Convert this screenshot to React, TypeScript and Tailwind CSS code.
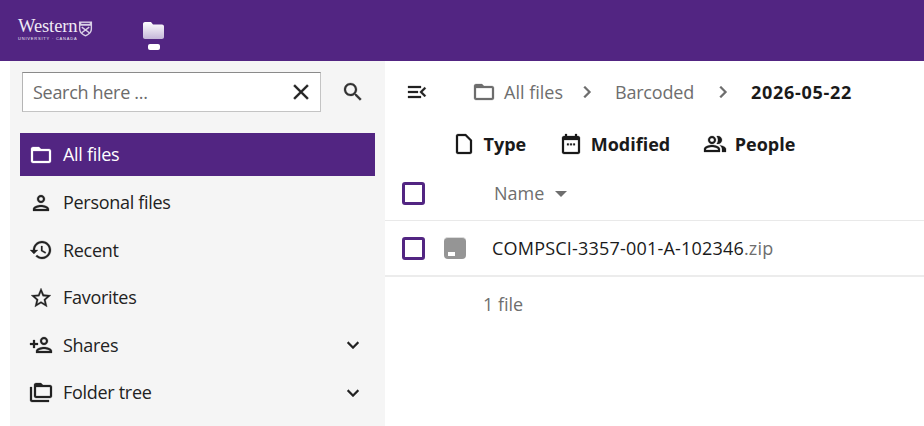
import { ReactNode } from 'react';

const P = {
  folder: 'M20 6h-8l-2-2H4c-1.1 0-1.99.9-1.99 2L2 18c0 1.1.9 2 2 2h16c1.1 0 2-.9 2-2V8c0-1.1-.9-2-2-2zm0 12H4V8h16v10z',
  person: 'M12 6c1.1 0 2 .9 2 2s-.9 2-2 2-2-.9-2-2 .9-2 2-2m0 10c2.7 0 5.8 1.29 6 2H6c.23-.72 3.31-2 6-2m0-12C9.79 4 8 5.79 8 8s1.79 4 4 4 4-1.79 4-4-1.79-4-4-4zm0 10c-2.67 0-8 1.34-8 4v2h16v-2c0-2.66-5.33-4-8-4z',
  history: 'M13 3c-4.97 0-9 4.03-9 9H1l3.89 3.89.07.14L9 12H6c0-3.87 3.13-7 7-7s7 3.13 7 7-3.13 7-7 7c-1.93 0-3.68-.79-4.94-2.06l-1.42 1.42C8.27 19.99 10.51 21 13 21c4.97 0 9-4.03 9-9s-4.03-9-9-9zm-1 5v5l4.28 2.54.72-1.21-3.5-2.08V8H12z',
  star: 'M22 9.24l-7.19-.62L12 2 9.19 8.63 2 9.24l5.46 4.73L5.82 21 12 17.27 18.18 21l-1.63-7.03L22 9.24zM12 15.4l-3.76 2.27 1-4.28-3.32-2.88 4.38-.38L12 6.1l1.71 4.04 4.38.38-3.32 2.88 1 4.28L12 15.4z',
  personAdd: 'M15 12c2.21 0 4-1.79 4-4s-1.79-4-4-4-4 1.79-4 4 1.79 4 4 4zm0-6c1.1 0 2 .9 2 2s-.9 2-2 2-2-.9-2-2 .9-2 2-2zm0 8c-2.67 0-8 1.34-8 4v2h16v-2c0-2.66-5.33-4-8-4zm-6 4c.22-.72 3.31-2 6-2 2.7 0 5.8 1.29 6 2H9zm-3-3v-3h3v-2H6V7H4v3H1v2h3v3h2z',
  folderCopy: 'M3 19h17v2H3c-1.1 0-2-.9-2-2V6h2v13zM23 6v9c0 1.1-.9 2-2 2H7c-1.1 0-2-.9-2-2l.01-11C5.01 2.9 5.9 2 7 2h5l2 2h7c1.1 0 2 .9 2 2zM7 15h14V6H7v9z',
  search: 'M15.5 14h-.79l-.28-.27C15.41 12.59 16 11.11 16 9.5 16 5.91 13.09 3 9.5 3S3 5.91 3 9.5 5.91 16 9.5 16c1.61 0 3.09-.59 4.23-1.57l.27.28v.79l5 4.99L20.49 19l-4.99-5zm-6 0C7.01 14 5 11.99 5 9.5S7.01 5 9.5 5 14 7.01 14 9.5 11.99 14 9.5 14z',
  close: 'M19 6.41L17.59 5 12 10.59 6.41 5 5 6.41 10.59 12 5 17.59 6.41 19 12 13.41 17.59 19 19 17.59 13.41 12z',
  menuOpen: 'M3 18h13v-2H3v2zm0-5h10v-2H3v2zm0-7v2h13V6H3zm18 9.59L17.42 12 21 8.41 19.59 7l-5 5 5 5L21 15.59z',
  file: 'M14 2H6c-1.1 0-2 .9-2 2v16c0 1.1.9 2 2 2h12c1.1 0 2-.9 2-2V8l-6-6zm4 18H6V4h7.17L18 8.83V20z',
  calendar: 'M19 4h-1V2h-2v2H8V2H6v2H5c-1.1 0-2 .9-2 2v14c0 1.1.9 2 2 2h14c1.1 0 2-.9 2-2V6c0-1.1-.9-2-2-2zm0 16H5V8h14v12zM8 11.500h1.800v1.800H8v-1.800zm3.100 0h1.800v1.800h-1.800v-1.800zm3.100 0H16v1.800h-1.800v-1.800z',
  people: 'M16.670 13.130C18.040 14.060 19 15.320 19 17v3h4v-3c0-2.180-3.570-3.470-6.330-3.870zM15 12c2.210 0 4-1.790 4-4s-1.790-4-4-4c-.470 0-.910.100-1.330.240C14.500 5.270 15 6.580 15 8s-.500 2.730-1.330 3.760c.420.140.860.240 1.330.240zM9 12c2.210 0 4-1.790 4-4s-1.790-4-4-4-4 1.790-4 4 1.790 4 4 4zm0-6c1.100 0 2 .900 2 2s-.900 2-2 2-2-.900-2-2 .900-2 2-2zM9 13c-2.670 0-8 1.340-8 4v3h16v-3c0-2.660-5.330-4-8-4zm6 5H3v-.990C3.200 16.290 6.300 15 9 15s5.800 1.290 6 2v1z',
  expand: 'M16.590 8.590L12 13.170 7.410 8.590 6 10l6 6 6-6z',
  chevron: 'M10 6L8.590 7.410 13.170 12l-4.580 4.590L10 18l6-6z',
};

function Icon({ d, className }: { d: string; className?: string }) {
  return (
    <svg viewBox="0 0 24 24" fill="currentColor" stroke="currentColor" strokeWidth="0.25" className={className}>
      <path d={d} />
    </svg>
  );
}

function NavItem({ icon, label, active, expand }: { icon: string; label: string; active?: boolean; expand?: boolean }) {
  return (
    <div className={`flex items-center pl-[9px] pr-[10px] ${active ? 'h-[43px] mt-[2px] mb-[3px] bg-[#522582] text-white' : 'h-[47.5px] text-[#222]'}`}>
      <Icon d={icon} className="w-6 h-6 shrink-0" />
      <span className="ml-[10px] flex-1 text-[18px] tracking-[-0.3px]">{label}</span>
      {expand && <Icon d={P.expand} className="w-6 h-6" />}
    </div>
  );
}

function Tool({ icon, children }: { icon: string; children: ReactNode }) {
  return (
    <div className="flex items-center gap-[7.5px] font-bold text-[18px] text-[#1a1a1a]">
      <Icon d={icon} className="w-6 h-6" />
      {children}
    </div>
  );
}

function Check() {
  return <div className="w-[23px] h-[23px] rounded-[3px] border-[3px] border-[#522582] bg-white" />;
}

export default function App() {
  return (
    <div className="w-[924px] h-[426px] overflow-hidden flex flex-col bg-white font-['Open_Sans',sans-serif]">
      <header className="h-[61px] shrink-0 bg-[#522582] flex items-start">
        <div className="w-[80px] ml-[18px] mt-[17px] flex items-start">
          <div className="flex flex-col items-center text-[#efeaf5]">
            <span className="font-['Liberation_Serif',serif] text-[18.5px] leading-[19px] tracking-[-0.1px]">Western</span>
            <span className="font-['Liberation_Sans',sans-serif] text-[4px] leading-[5px] tracking-[0.8px] whitespace-nowrap">UNIVERSITY · CANADA</span>
          </div>
          <svg viewBox="0 0 16 18" className="w-[15px] h-[18px] ml-[1px] mt-[3px] shrink-0">
            <path d="M1 1h14v8c0 4-3.500 6.500-7 8-3.500-1.500-7-4-7-8z" fill="#d9d0e6" />
            <path d="M2.500 5.500h11V9c0 3-2.500 5-5.500 6.500C5 14 2.500 12 2.500 9z" fill="#522582" />
            <path d="M3.500 3h9" stroke="#522582" strokeWidth="1" />
            <path d="M4 7l8 6M12 7l-8 6" stroke="#d9d0e6" strokeWidth="1.500" />
          </svg>
        </div>
        <div className="ml-[45px] mt-[22px] flex flex-col items-center">
          <svg viewBox="0 0 21 17" className="w-[21px] h-[17px]">
            <defs>
              <linearGradient id="fg" x1="0" y1="0" x2="0" y2="1">
                <stop offset="0" stopColor="#ffffff" />
                <stop offset="1" stopColor="#c5b6d9" />
              </linearGradient>
            </defs>
            <path d="M2 0h6l2 2.500h9c1.100 0 2 .900 2 2V15c0 1.100-.900 2-2 2H2c-1.100 0-2-.900-2-2V2C0 .900.900 0 2 0z" fill="url(#fg)" />
          </svg>
          <div className="w-[12px] h-[6px] rounded-[2px] bg-white mt-[5px]" />
        </div>
      </header>
      <div className="flex-1 flex min-h-0">
        <aside className="ml-[10px] w-[375px] shrink-0 bg-[#f5f5f5] px-[10px]">
          <div className="flex items-center mt-[11px] ml-[2px]">
            <div className="w-[299px] h-[40px] bg-white border border-[#c4c4c4] border-t-[#8a8a8a] border-l-[#b5b5b5] flex items-center pl-[10px] pr-[6px]">
              <span className="flex-1 text-[18px] text-[#6b6b6b] tracking-[-0.3px]">Search here ...</span>
              <Icon d={P.close} className="w-[26px] h-[26px] text-[#222]" />
            </div>
            <Icon d={P.search} className="w-6 h-6 ml-[20px] text-[#333]" />
          </div>
          <div className="mt-[21px]">
            <NavItem icon={P.folder} label="All files" active />
            <NavItem icon={P.person} label="Personal files" />
            <NavItem icon={P.history} label="Recent" />
            <NavItem icon={P.star} label="Favorites" />
            <NavItem icon={P.personAdd} label="Shares" expand />
            <NavItem icon={P.folderCopy} label="Folder tree" expand />
          </div>
        </aside>
        <main className="flex-1 min-w-0">
          <div className="flex items-center h-[40px] mt-[11px] pl-[20px] text-[18px] text-[#6e6e6e]">
            <Icon d={P.menuOpen} className="w-6 h-6 text-[#222]" />
            <Icon d={P.folder} className="w-6 h-6 ml-[43px]" />
            <span className="ml-[8px]">All files</span>
            <Icon d={P.chevron} className="w-6 h-6 ml-[12px]" />
            <span className="ml-[16px] tracking-[-0.2px]">Barcoded</span>
            <Icon d={P.chevron} className="w-6 h-6 ml-[17px]" />
            <span className="ml-[16px] font-bold text-[#1a1a1a] tracking-[0.7px]">2026-05-22</span>
          </div>
          <div className="flex items-center gap-[33px] h-[40px] mt-[12px] pl-[67px]">
            <Tool icon={P.file}>Type</Tool>
            <Tool icon={P.calendar}>Modified</Tool>
            <Tool icon={P.people}>People</Tool>
          </div>
          <div className="flex items-center h-[49px] mt-[8px] border-b border-[#e9e9e9] pl-[17px] pb-[5px]">
            <Check />
            <span className="ml-[69px] text-[18px] text-[#6e6e6e]">Name</span>
            <span className="ml-[11px] w-0 h-0 border-x-[6px] border-x-transparent border-t-[6px] border-t-[#6e6e6e]" />
          </div>
          <div className="flex items-center h-[56px] border-b-2 border-[#ececec] pl-[17px]">
            <Check />
            <div className="relative ml-[19px] w-[22px] h-[22px] rounded-[4px] bg-[#959595] border-t border-[#dcdcdc]">
              <div className="absolute left-[4px] bottom-[3px] w-[7px] h-[4px] bg-white" />
            </div>
            <span className="ml-[26px] text-[18px] text-[#1a1a1a] tracking-[0.2px]">
              COMPSCI-3357-001-A-102346<span className="text-[#6e6e6e]">.zip</span>
            </span>
          </div>
          <div className="pl-[98px] mt-[14px] text-[18px] text-[#6e6e6e]">1 file</div>
        </main>
      </div>
    </div>
  );
}
